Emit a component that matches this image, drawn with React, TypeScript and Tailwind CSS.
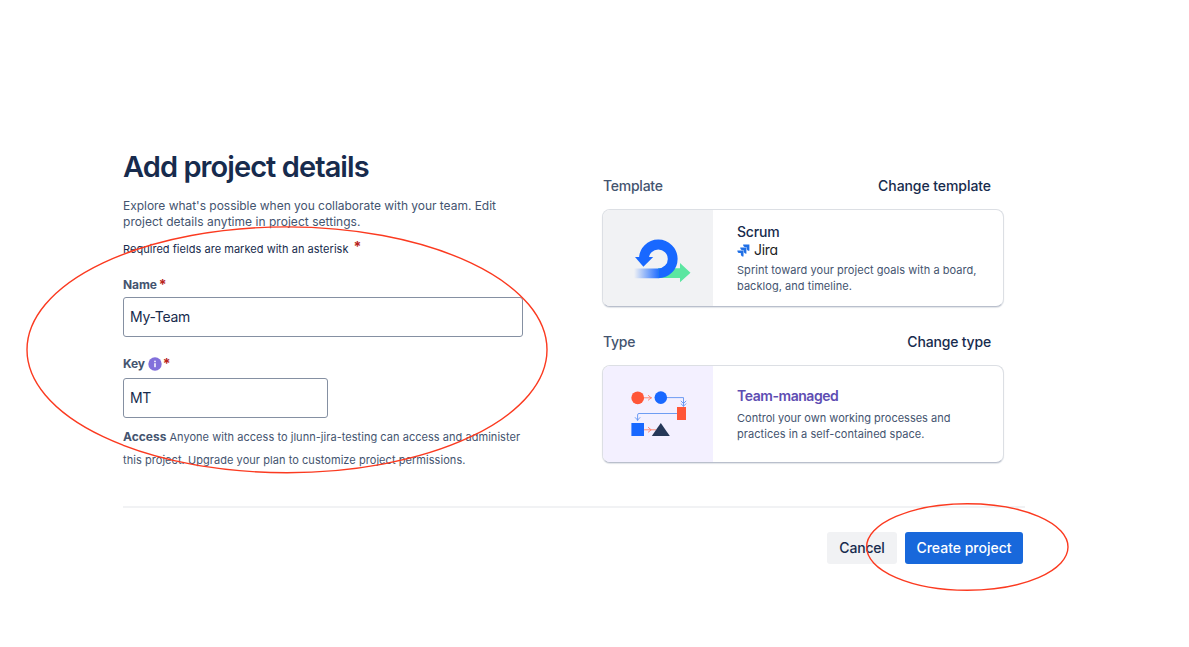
import type { ReactNode } from "react";

function Asterisk({ className }: { className: string }) {
  return <span className={`font-bold text-[#b8241b] ${className}`}>*</span>;
}

function InfoIcon() {
  return (
    <svg className="ml-[3px] h-[14px] w-[14px] shrink-0" viewBox="0 0 14 14">
      <circle cx="7" cy="7" r="6.7" fill="#8270db" />
      <rect x="6.25" y="6.2" width="1.5" height="4" fill="#fff" />
      <circle cx="7" cy="4.4" r="0.85" fill="#fff" />
    </svg>
  );
}

function ScrumIcon() {
  return (
    <svg className="h-[98px] w-[111px]" viewBox="602 209 111 98">
      <defs>
        <linearGradient id="tail" gradientUnits="userSpaceOnUse" x1="634" y1="0" x2="660" y2="0">
          <stop offset="0" stopColor="#1868ff" stopOpacity="0" />
          <stop offset="1" stopColor="#1868ff" />
        </linearGradient>
      </defs>
      <path d="M658 268.3h22v-5.2l10.5 9.7-10.5 9.4v-4.2h-22z" fill="#5ce6a1" />
      <path d="M634 268.4h24.5v9.8H634z" fill="url(#tail)" />
      <path d="M643.9 259a14.4 14.4 0 1 1 14.4 14.3" fill="none" stroke="#1868ff" strokeWidth="9.8" />
      <path d="M635 257h18.2l-9.8 9.8z" fill="#1868ff" />
    </svg>
  );
}

function TeamManagedIcon() {
  return (
    <svg className="h-[98px] w-[111px]" viewBox="602 365 111 98">
      <g fill="none" strokeWidth="0.9">
        <path d="M644 397.8h8M648 395.2l3.2 2.6-3.2 2.6M644 429.8h12M648 427.2l3.2 2.6-3.2 2.6" stroke="#ff7f68" />
        <path d="M667 397.6h16.5v9M680.8 400.8l2.7 2.7 2.7-2.7M680.8 403.5l2.7 2.7 2.7-2.7M677 413.5h-38q-1.4 0-1.4 1.4v6M635 417.3l2.6 2.8 2.6-2.8" stroke="#5f93f2" />
      </g>
      <circle cx="637.7" cy="397.8" r="6.4" fill="#ff5638" />
      <circle cx="660.8" cy="397.6" r="6.3" fill="#1868ff" />
      <path d="M677 407h9v13h-9z" fill="#ff5638" />
      <path d="M631.4 423h12.6v13h-12.6z" fill="#1868ff" />
      <path d="M660.8 423l9 13h-18z" fill="#253858" />
    </svg>
  );
}

function JiraMark() {
  return (
    <svg className="h-[13px] w-[13px] shrink-0" viewBox="0 0 13 13" fill="#1f6fe5">
      <path d="M6.1.6h6.3v6.2C10.7 6.8 9.7 5.8 9.7 4.2V3.3H8.8C7.2 3.3 6.1 2.3 6.1.6z" />
      <path d="M3.2 3.500h6.2v6.2C7.8 9.7 6.7 8.7 6.7 7.1V6.2H5.8C4.2 6.2 3.2 5.1 3.2 3.5z" />
      <path d="M.3 6.400h6.2v6.2C4.9 12.6 3.8 11.6 3.8 10V9.1H2.9C1.3 9.1.3 8 .3 6.4z" />
    </svg>
  );
}

function OptionCard({ art, tint, children }: { art: ReactNode; tint: string; children: ReactNode }) {
  return (
    <div className="flex h-[98px] w-[402px] overflow-hidden rounded-lg border border-[#dcdfe4] border-b-[#b9bfcc] bg-white shadow-[0_1px_1px_rgba(9,30,66,0.12)]">
      <div className={`-my-px -ml-px w-[111px] shrink-0 ${tint}`}>{art}</div>
      <div className="pl-6">{children}</div>
    </div>
  );
}

function SectionHeader({ label, action, tracking }: { label: string; action: string; tracking: string }) {
  return (
    <div className="mb-[13px] flex h-5 w-[389px] justify-between text-sm leading-5 font-medium">
      <span className="pl-px tracking-[-0.25px] text-[#44546f]">{label}</span>
      <button className={`text-[#172b4d] ${tracking}`}>{action}</button>
    </div>
  );
}

export default function App() {
  return (
    <main className="relative h-[647px] w-[1189px] overflow-hidden bg-white pl-[123px] font-['Inter','Liberation_Sans',sans-serif] whitespace-nowrap text-[#172b4d]">
      <div className="flex h-[506px] w-[902px]">
        <section className="w-[479px] pt-[147px]">
          <h1 className="h-10 text-[29px] leading-10 font-semibold tracking-[-0.93px]">Add project details</h1>
          <p className="mt-[11px] text-xs leading-4 text-[#44546f]">
            <span className="block tracking-[-0.03px]">Explore what's possible when you collaborate with your team. Edit</span>
            <span className="block tracking-[0.03px]">project details anytime in project settings.</span>
          </p>
          <p className="mt-[11px] h-4 text-[11px] leading-4 tracking-[0.035px]">
            Required fields are marked with an asterisk
            <Asterisk className="relative -top-px ml-[5px] text-sm leading-none" />
          </p>
          <label className="mt-5 flex h-4 text-xs leading-4 font-bold text-[#44546f]">
            <span className="tracking-[-0.1px]">Name</span>
            <Asterisk className="ml-0.5 text-sm leading-4" />
          </label>
          <input
            className="mt-1 block h-10 w-[400px] rounded-[3px] border border-[#8590a2] px-1.5 pb-0.5 text-sm tracking-[-0.25px]"
            defaultValue="My-Team"
          />
          <label className="mt-[19px] flex h-4 items-center text-xs leading-4 font-bold text-[#44546f]">
            <span className="tracking-[-0.2px]">Key</span>
            <InfoIcon />
            <Asterisk className="ml-px text-sm leading-4" />
          </label>
          <input
            className="mt-1.5 block h-10 w-[205px] rounded-[3px] border border-[#8590a2] px-1.5 pb-0.5 text-sm tracking-[-0.5px]"
            defaultValue="MT"
          />
          <p className="mt-2 text-[11px] leading-[23px] text-[#44546f]">
            <span className="block">
              <strong className="mr-[3px] text-xs leading-none font-bold">Access</strong>
              <span className="tracking-[0.04px]">Anyone with access to jlunn-jira-testing can access and administer</span>
            </span>
            <span className="block tracking-[0.055px]">this project. Upgrade your plan to customize project permissions.</span>
          </p>
        </section>

        <section className="w-[402px] pt-[176px]">
          <SectionHeader label="Template" action="Change template" tracking="tracking-[-0.07px]" />
          <OptionCard art={<ScrumIcon />} tint="bg-[#f1f2f4]">
            <h2 className="mt-[13px] h-[18px] text-sm leading-[18px] font-medium tracking-[-0.2px]">Scrum</h2>
            <div className="flex h-[18px] items-center gap-1 text-[#1d1d1f]">
              <JiraMark />
              <span className="text-sm leading-[18px] tracking-[-0.3px] [font-feature-settings:'cv11']">Jira</span>
            </div>
            <p className="mt-[3px] text-[11px] leading-4 tracking-[0.05px] text-[#44546f]">
              <span className="block">Sprint toward your project goals with a board,</span>
              <span className="block">backlog, and timeline.</span>
            </p>
          </OptionCard>
          <div className="h-[25px]" />
          <SectionHeader label="Type" action="Change type" tracking="tracking-[-0.18px]" />
          <OptionCard art={<TeamManagedIcon />} tint="bg-[#f3f0ff]">
            <h2 className="mt-5 h-5 text-sm leading-5 font-semibold tracking-[-0.45px] text-[#5e4db2]">Team-managed</h2>
            <p className="mt-1 text-[11px] leading-4 text-[#44546f]">
              <span className="block">Control your own working processes and</span>
              <span className="block tracking-[0.05px]">practices in a self-contained space.</span>
            </p>
          </OptionCard>
        </section>
      </div>

      <div className="h-0.5 w-[902px] bg-[#f1f2f4]" />
      <div className="mt-6 flex w-[900px] justify-end gap-2 text-sm font-medium">
        <button className="h-8 w-[70px] rounded-[3px] bg-[#f1f2f4] tracking-[-0.2px]">Cancel</button>
        <button className="h-8 w-[118px] rounded-[3px] bg-[#1868db] text-white">Create project</button>
      </div>

      <svg className="pointer-events-none absolute inset-0 h-[647px] w-[1189px]" viewBox="0 0 1189 647" fill="none" stroke="#fb3a20" strokeWidth="1.4">
        <ellipse cx="287" cy="349.8" rx="260" ry="122.900" />
        <ellipse cx="967.3" cy="547" rx="100.700" ry="43.200" />
      </svg>
    </main>
  );
}
